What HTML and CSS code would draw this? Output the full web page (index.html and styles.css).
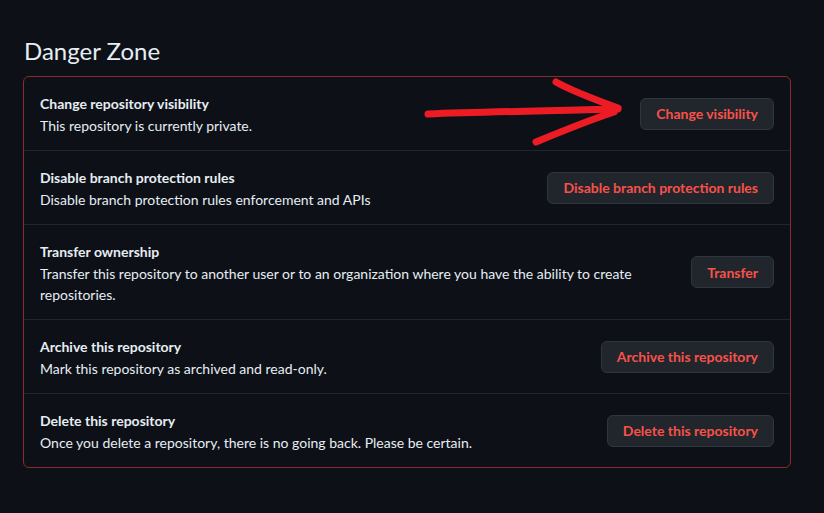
FILE: index.html
```html
<!DOCTYPE html>
<html>
<head>
<meta charset="utf-8">
<link rel="stylesheet" href="styles.css">
</head>
<body>
<div class="page">
  <h2 class="heading">Danger Zone</h2>
  <div class="zone">
    <div class="row">
      <div class="info">
        <div class="title">Change repository visibility</div>
        <div class="desc">This repository is currently private.</div>
      </div>
      <button class="btn">Change visibility</button>
    </div>
    <div class="row">
      <div class="info">
        <div class="title">Disable branch protection rules</div>
        <div class="desc">Disable branch protection rules enforcement and APIs</div>
      </div>
      <button class="btn">Disable branch protection rules</button>
    </div>
    <div class="row">
      <div class="info">
        <div class="title">Transfer ownership</div>
        <div class="desc">Transfer this repository to another user or to an organization where you have the ability to create repositories.</div>
      </div>
      <button class="btn">Transfer</button>
    </div>
    <div class="row">
      <div class="info">
        <div class="title">Archive this repository</div>
        <div class="desc">Mark this repository as archived and read-only.</div>
      </div>
      <button class="btn">Archive this repository</button>
    </div>
    <div class="row">
      <div class="info">
        <div class="title">Delete this repository</div>
        <div class="desc">Once you delete a repository, there is no going back. Please be certain.</div>
      </div>
      <button class="btn">Delete this repository</button>
    </div>
  </div>
</div>
<svg class="arrow" width="824" height="513" viewBox="0 0 824 513">
  <path d="M428 114 C 480 112, 540 111, 618 109" />
  <path d="M556 82 C 570 90, 585 96, 618 108" />
  <path d="M536 142 C 560 132, 590 120, 614 112" />
</svg>
</body>
</html>
```

FILE: styles.css
```css
html, body {
  margin: 0;
  padding: 0;
  background: #0d1117;
  width: 824px;
  height: 513px;
  overflow: hidden;
}
body {
  position: relative;
  font-family: Lato, "Noto Sans", sans-serif;
  color: #e6edf3;
}
.page {
  padding: 36px 33px 0 23px;
}
.heading {
  margin: 0 0 10px 1px;
  font-size: 24px;
  font-weight: 400;
  line-height: 30px;
  color: #e6edf3;
}
.zone {
  border: 1px solid #8a2c2b;
  border-radius: 6px;
}
.row {
  display: flex;
  align-items: center;
  gap: 16px;
  padding: 17px 16px 15px;
  border-top: 1px solid #21262d;
}
.row:first-child {
  border-top: none;
}
.info {
  flex: 1;
  font-size: 14px;
}
.title {
  font-weight: 700;
  line-height: 20px;
}
.desc {
  font-weight: 400;
  line-height: 21px;
  padding-top: 1px;
  margin-bottom: -1px;
}
.btn {
  flex: none;
  height: 32px;
  padding: 0 15px;
  margin-top: -2px;
  font-family: inherit;
  font-size: 14px;
  font-weight: 700;
  color: #f85149;
  background: #21262d;
  border: 1px solid #30363d;
  border-radius: 6px;
}
.arrow {
  position: absolute;
  left: 0;
  top: 0;
  pointer-events: none;
}
.arrow path {
  fill: none;
  stroke: #ed1c24;
  stroke-width: 7;
  stroke-linecap: round;
  stroke-linejoin: round;
}
```
